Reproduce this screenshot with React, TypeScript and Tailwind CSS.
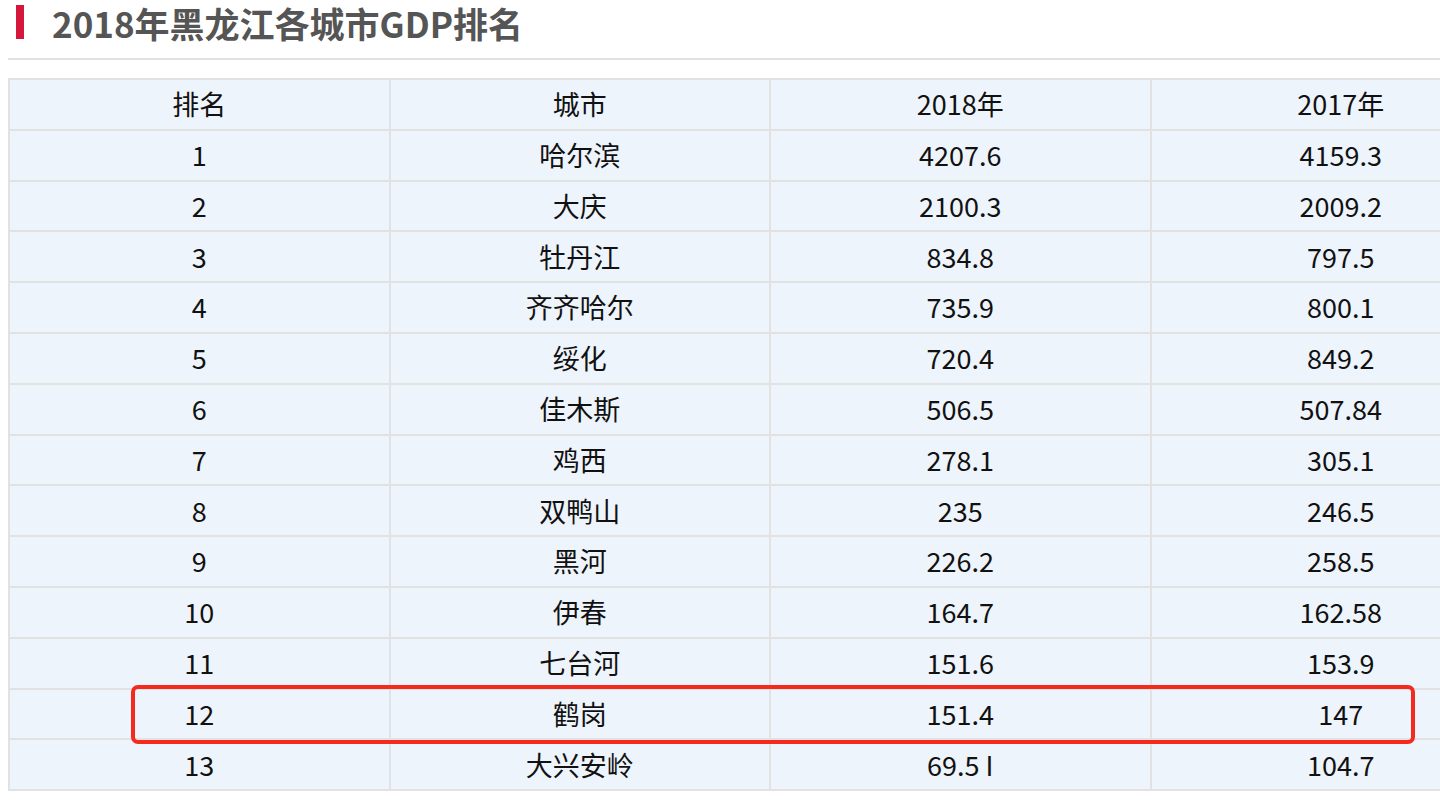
import React from "react";

const rows: [string, string, string, string][] = [
  ["1", "哈尔滨", "4207.6", "4159.3"],
  ["2", "大庆", "2100.3", "2009.2"],
  ["3", "牡丹江", "834.8", "797.5"],
  ["4", "齐齐哈尔", "735.9", "800.1"],
  ["5", "绥化", "720.4", "849.2"],
  ["6", "佳木斯", "506.5", "507.84"],
  ["7", "鸡西", "278.1", "305.1"],
  ["8", "双鸭山", "235", "246.5"],
  ["9", "黑河", "226.2", "258.5"],
  ["10", "伊春", "164.7", "162.58"],
  ["11", "七台河", "151.6", "153.9"],
  ["12", "鹤岗", "151.4", "147"],
  ["13", "大兴安岭", "69.5 I", "104.7"],
];

export default function App() {
  const font = { fontFamily: '"Noto Sans CJK SC", "Noto Sans", sans-serif' };
  return (
    <div className="relative w-[1440px] h-[811px] overflow-hidden bg-white" style={font}>
      <div className="flex items-center h-[44px] pl-[16px]">
        <div className="w-[8px] h-[34px] bg-[#d6173c]" />
        <div className="ml-[28px] text-[35px] font-bold text-[#555] leading-none">2018年黑龙江各城市GDP排名</div>
      </div>
      <div className="ml-[8px] mt-[14px] h-[2px] bg-[#e2e2e2]" />
      <div className="ml-[8px] mt-[18px] w-[1524px] border-t-2 border-l-2 border-[#e2e2e2]">
        {[["排名", "城市", "2018年", "2017年"] as [string, string, string, string], ...rows].map((r, i) => (
          <div key={i} className="grid grid-cols-4 h-[50.8px] bg-[#eef4fb]">
            {r.map((c, j) => (
              <div key={j} className="flex items-center justify-center border-r-2 border-b-2 border-[#e2e2e2] text-[27px] text-[#111]">
                {c}
              </div>
            ))}
          </div>
        ))}
      </div>
      <div className="absolute left-[131px] top-[685px] w-[1284px] h-[59px] border-[4px] border-[#f52a1f] rounded-[7px]" />
    </div>
  );
}
